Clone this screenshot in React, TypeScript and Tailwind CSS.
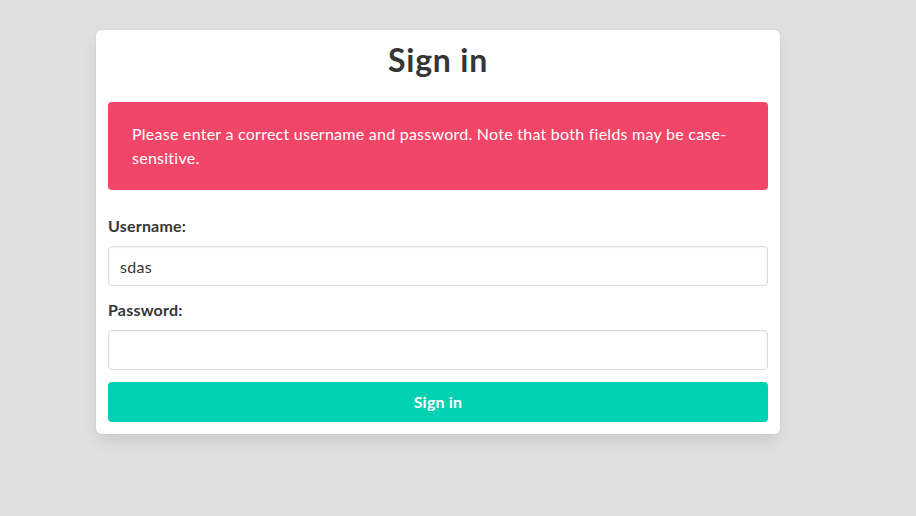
export default function App() {
  return (
    <div className="min-h-[516px] w-full bg-[#e0e0e0] pt-[30px]" style={{ fontFamily: 'Lato, "Noto Sans", sans-serif' }}>
      <div className="ml-[96px] w-[684px] rounded-[6px] bg-white p-3 text-[#363636] shadow-[0_8px_16px_-2px_rgba(10,10,10,0.1),0_0_0_1px_rgba(10,10,10,0.02)]">
        <h1 className="mb-6 text-center text-[32px] font-bold leading-[36px] tracking-[0.8px] text-[#363636]">Sign in</h1>
        <div className="rounded-[4px] bg-[#f14668] py-5 pl-6 pr-10 text-[16px] leading-6 tracking-[0.25px] text-white">
          Please enter a correct username and password. Note that both fields may be case-<br />sensitive.
        </div>
        <form className="mt-6 flex flex-col">
          <label className="mb-2 block text-[16px] font-bold leading-6 tracking-[0.2px] text-[#363636]">Username:</label>
          <input
            className="h-10 w-full rounded-[4px] border border-[#dbdbdb] px-[11px] text-[16px] tracking-[0.3px] text-[#363636] shadow-[inset_0_1px_2px_rgba(10,10,10,0.05)] outline-none"
            defaultValue="sdas"
            style={{ fontFamily: 'Lato, "Noto Sans", sans-serif' }}
          />
          <label className="mb-2 mt-3 block text-[16px] font-bold leading-6 tracking-[0.2px] text-[#363636]">Password:</label>
          <input
            type="password"
            className="h-10 w-full rounded-[4px] border border-[#dbdbdb] px-[11px] text-[16px] shadow-[inset_0_1px_2px_rgba(10,10,10,0.05)] outline-none"
          />
          <button
            type="button"
            className="mt-3 h-10 w-full rounded-[4px] bg-[#00d1b2] text-[16px] font-bold tracking-[0.2px] text-white"
            style={{ fontFamily: 'Lato, "Noto Sans", sans-serif' }}
          >
            Sign in
          </button>
        </form>
      </div>
    </div>
  );
}
